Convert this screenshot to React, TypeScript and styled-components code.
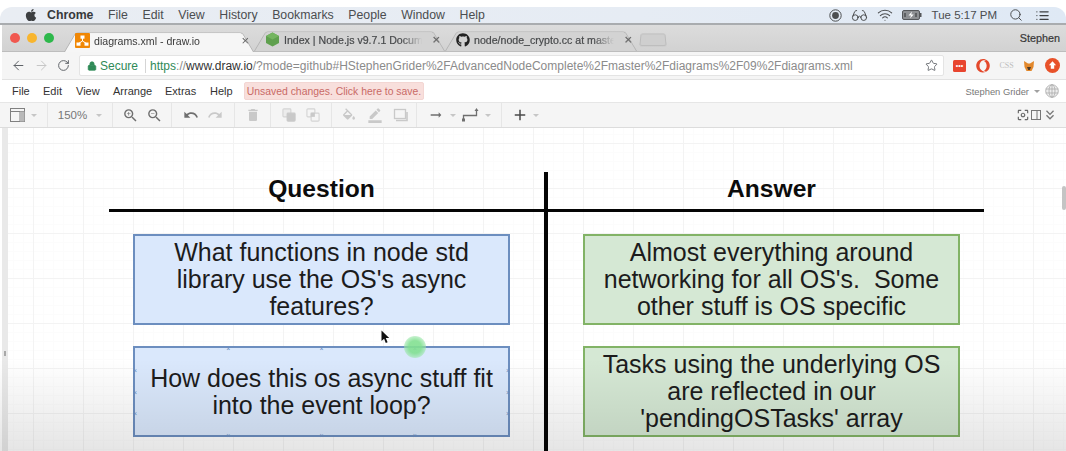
import React, { ReactElement, ReactNode } from 'react';
import styled, { createGlobalStyle } from 'styled-components';
import { FaApple, FaGithub, FaOpera } from 'react-icons/fa';
import { FiList } from 'react-icons/fi';
import {
  MdAdd,
  MdArrowRightAlt,
  MdBorderColor,
  MdCenterFocusWeak,
  MdDelete,
  MdKeyboardDoubleArrowDown,
  MdRedo,
  MdUndo,
  MdZoomIn,
  MdZoomOut,
} from 'react-icons/md';
import { ArrowLeft, ArrowRight, Glasses, Lock, RotateCw, Search, Star, Wifi } from 'lucide-react';

const GlobalStyle = createGlobalStyle`
  html, body {
    margin: 0;
    padding: 0;
    background: #fff;
    overflow: hidden;
  }
  * {
    box-sizing: border-box;
  }
`;

const Screen = styled.div`
  width: 1066px;
  height: 451px;
  padding: 7px 0 0 2px;
  display: flex;
  flex-direction: column;
  overflow: hidden;
  position: relative;
  background: #fff;
  font-family: 'Liberation Sans', Arial, sans-serif;
  filter: blur(0.45px);
`;

/* mac menu bar */
const MacBar = styled.div`
  height: 18px;
  flex: none;
  display: flex;
  align-items: center;
  padding-left: 24px;
  margin-left: -2px;
  border-radius: 12px 12px 0 0;
  background: linear-gradient(90deg, #e9edf3, #e6ecf4 60%, #dfe9f5);
  border-bottom: 2px solid #a9acaf;
  font-size: 12.3px;
  color: #4b4d50;
`;

const MacMenu = styled.div`
  display: flex;
  align-items: center;
  gap: 14.6px;
  margin-left: 9px;
`;

const MacBrand = styled.span`
  font-weight: 700;
  color: #37393b;
`;

const MacExtras = styled.div`
  margin-left: auto;
  display: flex;
  align-items: center;
  gap: 9px;
  padding-right: 16px;
  font-size: 11.5px;
  svg {
    display: block;
  }
`;

const MacClock = styled.span`
  margin: 0 3px 0 1px;
`;

const MacSearch = styled(Search)`
  margin-right: 3px;
`;

/* tabs */
const TabStrip = styled.div`
  height: 27px;
  flex: none;
  display: flex;
  align-items: flex-end;
  padding-left: 8px;
  background: linear-gradient(#dcdcdc, #d2d2d2);
  border-bottom: 1px solid #bdbdbd;
`;

const Lights = styled.div`
  display: flex;
  gap: 7px;
  align-self: center;
  margin-right: 11px;
  width: 43px;
`;

const Light = styled.span<{ $color: string }>`
  width: 10px;
  height: 10px;
  flex: none;
  border-radius: 50%;
  background: ${(p) => p.$color};
`;

const Tab = styled.div<{ $active?: boolean; $width: number }>`
  width: ${(p) => p.$width}px;
  height: 23px;
  flex: none;
  position: relative;
  display: flex;
  align-items: center;
  gap: 4px;
  padding: 0 5px 0 11px;
  font-size: 10.6px;
  color: ${(p) => (p.$active ? '#3a3a3a' : '#47494b')};
  -webkit-text-stroke: ${(p) => (p.$active ? '0' : '0.2px')};
  z-index: ${(p) => (p.$active ? 2 : 1)};
  margin-bottom: ${(p) => (p.$active ? '-1px' : '0')};

  svg {
    flex: none;
  }

  &::before {
    content: '';
    position: absolute;
    inset: 0;
    z-index: -1;
    background: ${(p) => (p.$active ? '#f6f6f6' : '#d3d3d3')};
    border: 1px solid #b4b4b4;
    border-bottom: none;
    border-radius: 3px 3px 0 0;
    transform: perspective(40px) rotateX(14deg);
    transform-origin: bottom;
  }
`;

const TabTitle = styled.span<{ $fade?: boolean }>`
  flex: 1;
  min-width: 0;
  white-space: nowrap;
  ${(p) =>
    p.$fade &&
    `-webkit-mask-image: linear-gradient(90deg, #000 82%, transparent 96%);
     mask-image: linear-gradient(90deg, #000 82%, transparent 96%);`}
`;

const TabClose = styled.span`
  font-size: 13px;
  color: #666;
  line-height: 1;
`;

const NewTab = styled.div`
  width: 26px;
  height: 13px;
  align-self: center;
  margin: 2px 0 0 3px;
  background: #cfcfcf;
  border: 1px solid #bcbcbc;
  border-radius: 2px;
  transform: perspective(30px) rotateX(14deg);
`;

const ProfileName = styled.div`
  margin-left: auto;
  align-self: center;
  padding-right: 6px;
  font-size: 10.8px;
  color: #383838;
  -webkit-text-stroke: 0.2px #383838;
`;

/* address bar */
const AddressBar = styled.div`
  height: 28px;
  flex: none;
  display: flex;
  align-items: center;
  padding-left: 9px;
  background: #f5f5f5;
  border-bottom: 1px solid #e2e2e2;
`;

const NavIcons = styled.div`
  width: 68px;
  display: flex;
  align-items: center;
  gap: 8px;
  flex: none;
`;

const Omnibox = styled.div`
  width: 865px;
  height: 21px;
  flex: none;
  display: flex;
  align-items: center;
  padding: 0 5px 0 7px;
  background: #fff;
  border: 1px solid #e4e4e4;
  border-radius: 2px;
  font-size: 12px;
  white-space: nowrap;
`;

const SecureLabel = styled.span`
  margin-left: 3px;
  padding-right: 7px;
  margin-right: 4px;
  color: #2f8a57;
  border-right: 1px solid #d5d5d5;
`;

const UrlPart = styled.span<{ $tone: 'green' | 'dark' | 'grey' }>`
  color: ${(p) => ({ green: '#2f8a57', dark: '#333', grey: '#8b8b8b' }[p.$tone])};
`;

const StarSlot = styled.span`
  margin-left: auto;
  display: flex;
`;

const Extensions = styled.div`
  flex: 1;
  display: flex;
  align-items: center;
  justify-content: space-between;
  padding: 0 6px 0 9px;
`;

const RedBox = styled.span`
  width: 13px;
  height: 12px;
  border-radius: 1.5px;
  background: #e8452f;
  display: flex;
  align-items: center;
  justify-content: center;
  color: #fff;
  font-size: 7px;
  line-height: 1;
`;

const CssMark = styled.span`
  font-family: 'Liberation Serif', serif;
  font-size: 8px;
  color: #bdbdbd;
`;

/* draw.io menu */
const AppMenu = styled.div`
  height: 22px;
  flex: none;
  display: flex;
  align-items: center;
  padding-left: 10px;
  background: #fff;
  font-size: 11px;
  color: #333;
`;

const MenuItem = styled.span<{ $width: number }>`
  width: ${(p) => p.$width}px;
  flex: none;
`;

const SaveNotice = styled.div`
  width: 180px;
  height: 18px;
  flex: none;
  margin-left: -1px;
  display: flex;
  align-items: center;
  justify-content: center;
  font-size: 10.4px;
  color: #c96a66;
  background: #f8dfdc;
  border: 1px solid #f3d6d3;
  border-radius: 2px;
`;

const UserBox = styled.div`
  margin-left: auto;
  display: flex;
  align-items: center;
  gap: 5px;
  padding-right: 7px;
  font-size: 9.4px;
  color: #777;
`;

const Caret = styled.span<{ $light?: boolean }>`
  width: 0;
  height: 0;
  flex: none;
  border-left: 3.5px solid transparent;
  border-right: 3.5px solid transparent;
  border-top: 3.5px solid ${(p) => (p.$light ? '#c6c6c6' : '#a0a0a0')};
`;

/* toolbar */
const Toolbar = styled.div`
  height: 26px;
  flex: none;
  display: flex;
  align-items: stretch;
  margin-left: -2px;
  background: #f5f5f5;
  border-top: 1px solid #e6e6e6;
  border-bottom: 1px solid #dcdcdc;
`;

const ToolGroup = styled.div<{ $width: number; $gap?: number; $plain?: boolean }>`
  width: ${(p) => p.$width}px;
  flex: none;
  display: flex;
  align-items: center;
  justify-content: center;
  gap: ${(p) => p.$gap ?? 8}px;
  border-right: ${(p) => (p.$plain ? 'none' : '1px solid #e6e6e6')};
`;

const ZoomLabel = styled.span`
  font-size: 11.5px;
  color: #777;
`;

const ToolEnd = styled.div`
  margin-left: auto;
  display: flex;
  align-items: center;
  gap: 1px;
  padding-right: 8px;
`;

/* canvas */
const Workspace = styled.div`
  flex: 1;
  display: flex;
  min-height: 0;
  position: relative;
`;

const Gutter = styled.div`
  width: 6px;
  flex: none;
  display: flex;
  justify-content: center;
  padding-top: 223px;
  background: #e9e9e9;
`;

const GutterGrip = styled.span`
  width: 2px;
  height: 5px;
  background: #a8a8a8;
`;

const Sheet = styled.div`
  flex: 1;
  position: relative;
  padding: 36px 0 0 125px;
  background-color: #fff;
  background-image: linear-gradient(90deg, #f3f3f3 1px, transparent 1px),
    linear-gradient(#f3f3f3 1px, transparent 1px),
    linear-gradient(90deg, #fcfcfc 1px, transparent 1px),
    linear-gradient(#fcfcfc 1px, transparent 1px);
  background-size: 50px 45px, 50px 45px, 10px 9px, 10px 9px;
  background-position: 25px 15px, 25px 15px, 5px 6px, 5px 6px;
`;

const Board = styled.div`
  display: grid;
  grid-template-columns: 377px 377px;
  grid-template-rows: 49px 91px 91px;
  column-gap: 73px;
  row-gap: 21px;
`;

const ColumnTitle = styled.div`
  display: flex;
  align-items: center;
  justify-content: center;
  font-size: 24.6px;
  font-weight: 700;
  color: #0c0c0c;
`;

const Card = styled.div<{ $tone: 'blue' | 'green' }>`
  position: relative;
  display: flex;
  align-items: center;
  justify-content: center;
  padding: 0 4px;
  text-align: center;
  white-space: pre-wrap;
  font-size: 25px;
  line-height: 27px;
  color: #1c1c1c;
  background: ${(p) => (p.$tone === 'blue' ? '#dae8fc' : '#d5e8d4')};
  border: 2px solid ${(p) => (p.$tone === 'blue' ? '#6c8ebf' : '#82b366')};
`;

const HRule = styled.div`
  position: absolute;
  left: 101px;
  top: 81px;
  width: 875px;
  height: 3px;
  background: #050505;
`;

const VRule = styled.div`
  position: absolute;
  left: 536px;
  top: 44px;
  bottom: 0;
  width: 3.5px;
  background: #050505;
`;

const Handle = styled.span<{ $left: number; $top: number }>`
  position: absolute;
  left: ${(p) => p.$left}%;
  top: ${(p) => p.$top}%;
  width: 5px;
  height: 5px;
  transform: translate(-50%, -50%);
  color: #6c8ebf;
  font-size: 7px;
  line-height: 5px;
  text-align: center;
`;

const CursorGlow = styled.span`
  position: absolute;
  left: 396px;
  top: 208px;
  width: 22px;
  height: 22px;
  border-radius: 50%;
  background: radial-gradient(circle, rgba(130, 224, 145, 0.9) 40%, rgba(160, 232, 175, 0.5) 75%, transparent 100%);
`;

const Pointer = styled.svg`
  position: absolute;
  left: 373px;
  top: 202px;
`;

const ScrollThumb = styled.span`
  position: absolute;
  right: 0;
  top: 58px;
  width: 4px;
  height: 24px;
  border-radius: 2px;
  background: #c4c4c4;
`;

const BottomShade = styled.div`
  position: absolute;
  left: -2px;
  right: 0;
  bottom: 0;
  height: 92px;
  pointer-events: none;
  background: linear-gradient(rgba(0, 0, 0, 0), rgba(0, 0, 0, 0.1));
`;

const ICON_ON = '#6f6f6f';
const ICON_OFF = '#c9c9c9';

const macMenus = ['File', 'Edit', 'View', 'History', 'Bookmarks', 'People', 'Window', 'Help'];

const appMenus: [string, number][] = [
  ['File', 31],
  ['Edit', 33],
  ['View', 37],
  ['Arrange', 52],
  ['Extras', 45],
  ['Help', 35],
];

const handleSpots: [number, number][] = [
  [25, 0],
  [50, 0],
  [75, 0],
  [25, 100],
  [50, 100],
  [75, 100],
  [0, 25],
  [0, 50],
  [0, 75],
  [100, 25],
  [100, 50],
  [100, 75],
];

function DrawioIcon(): ReactElement {
  return (
    <svg width="15" height="15" viewBox="0 0 15 15">
      <rect width="15" height="15" rx="1" fill="#f08705" />
      <path d="M7.5 5v3M7.5 8L3.5 10.5M7.5 8l4 2.5" stroke="#fff" strokeWidth="1" fill="none" />
      <rect x="5.5" y="2.5" width="4" height="3.2" fill="#fff" />
      <rect x="1.5" y="9.5" width="4" height="3.2" fill="#fff" />
      <rect x="9.5" y="9.5" width="4" height="3.2" fill="#fff" />
    </svg>
  );
}

function NodeIcon(): ReactElement {
  return (
    <svg width="15" height="15" viewBox="0 0 15 15">
      <polygon points="7.5,0.5 14,4 14,11 7.5,14.5 1,11 1,4" fill="#5fa04e" />
      <polygon points="7.5,0.5 14,4 7.5,7.5 1,4" fill="#74b560" />
    </svg>
  );
}

function RecordIcon(): ReactElement {
  return (
    <svg width="13" height="13" viewBox="0 0 13 13">
      <circle cx="6.5" cy="6.5" r="5.7" fill="none" stroke="#4c4e50" strokeWidth="1" />
      <circle cx="6.5" cy="6.5" r="3.4" fill="#4c4e50" />
    </svg>
  );
}

function BatteryIcon(): ReactElement {
  return (
    <svg width="20" height="10" viewBox="0 0 20 10">
      <rect x="0.5" y="0.5" width="17" height="9" rx="1.5" fill="#8d8f92" stroke="#55575a" />
      <rect x="18" y="3" width="1.5" height="4" fill="#55575a" />
      <path d="M10 1.5L6.5 5.5h2.5L8 8.5l3.7-4H9.2z" fill="#fff" />
      <path d="M3 3v4M14 3v4" stroke="#2f3133" strokeWidth="1" />
    </svg>
  );
}

function PanelIcon(): ReactElement {
  return (
    <svg width="15" height="14" viewBox="0 0 15 14">
      <rect x="0.5" y="0.5" width="14" height="13" fill="none" stroke="#808080" />
      <path d="M0.5 3.5h14M10 3.5v10" stroke="#808080" />
      <rect x="10" y="3.5" width="4.5" height="10" fill="#b9b9b9" />
    </svg>
  );
}

function OrderIcon({ back }: { back?: boolean }): ReactElement {
  return (
    <svg width="14" height="14" viewBox="0 0 15 15">
      <rect x="1" y="1" width="8.5" height="8.5" rx="1" fill={back ? '#f5f5f5' : '#ececec'} stroke="#d4d4d4" strokeWidth="1.2" />
      <rect x="5.5" y="5.5" width="8.5" height="8.5" rx="1" fill={back ? '#f5f5f5' : '#c9c9c9'} stroke={back ? '#d4d4d4' : '#c9c9c9'} strokeWidth="1.2" />
      {back && <rect x="5" y="5" width="4.5" height="4.5" fill="#c9c9c9" />}
    </svg>
  );
}

function FillIcon(): ReactElement {
  return (
    <svg width="16" height="16" viewBox="0 0 24 20">
      <path
        d="M16.56 8.94L7.62 0 6.21 1.41l2.38 2.38-5.15 5.15c-.59.59-.59 1.54 0 2.12l5.5 5.5c.29.29.68.44 1.06.44s.77-.15 1.06-.44l5.5-5.5c.59-.58.59-1.53 0-2.12zM5.21 10L10 5.21 14.79 10H5.21zM19 11.5s-2 2.17-2 3.5c0 1.1.9 2 2 2s2-.9 2-2c0-1.33-2-3.5-2-3.5z"
        fill={ICON_OFF}
      />
    </svg>
  );
}

function ShadowIcon(): ReactElement {
  return (
    <svg width="15" height="14" viewBox="0 0 15 14">
      <rect x="1.5" y="1.5" width="11" height="9" fill="none" stroke={ICON_OFF} strokeWidth="1.3" />
      <path d="M3 12.5h11V4" fill="none" stroke={ICON_OFF} strokeWidth="1.6" />
    </svg>
  );
}

function WaypointIcon(): ReactElement {
  return (
    <svg width="17" height="14" viewBox="0 0 17 14">
      <path d="M1.5 12.5V7.5h13V2.5" fill="none" stroke={ICON_ON} strokeWidth="1.3" />
      <rect x="0" y="10.5" width="3" height="3" fill={ICON_ON} />
      <polygon points="12.5,3 14.5,0 16.5,3" fill={ICON_ON} />
    </svg>
  );
}

function SplitIcon(): ReactElement {
  return (
    <svg width="10" height="10" viewBox="0 0 10 10">
      <rect x="0.5" y="0.5" width="9" height="9" fill="none" stroke="#777" />
      <path d="M6 0.5v9" stroke="#777" />
    </svg>
  );
}

function GlobeIcon(): ReactElement {
  return (
    <svg width="14" height="14" viewBox="0 0 14 14" fill="none" stroke="#aaa" strokeWidth="0.8">
      <circle cx="7" cy="7" r="6.3" fill="#eee" />
      <ellipse cx="7" cy="7" rx="3" ry="6.3" />
      <path d="M0.8 5h12.4M0.8 9h12.4M7 0.7v12.6" />
    </svg>
  );
}

function FoxIcon(): ReactElement {
  return (
    <svg width="12" height="12" viewBox="0 0 12 12">
      <polygon points="1,1 5,3.5 7,3.5 11,1 10.5,7 8.5,11 3.5,11 1.5,7" fill="#e2882c" />
      <polygon points="4,7 8,7 6.8,10 5.2,10" fill="#4a3a2a" />
    </svg>
  );
}

function UploadIcon(): ReactElement {
  return (
    <svg width="15" height="15" viewBox="0 0 15 15">
      <circle cx="7.5" cy="7.5" r="7.5" fill="#e8522a" />
      <path d="M7.5 3.2l3.6 4H9.2v3.6H5.8V7.2H3.9z" fill="#fff" />
    </svg>
  );
}

function Tool({
  children,
  gap,
  plain,
  width,
}: {
  children: ReactNode;
  gap?: number;
  plain?: boolean;
  width: number;
}): ReactElement {
  return (
    <ToolGroup $width={width} $gap={gap} $plain={plain}>
      {children}
    </ToolGroup>
  );
}

function App(): ReactElement {
  return (
    <>
      <GlobalStyle />
      <Screen>
        <MacBar>
          <FaApple size={14} color="#3d3f41" />
          <MacMenu>
            <MacBrand>Chrome</MacBrand>
            {macMenus.map((item) => (
              <span key={item}>{item}</span>
            ))}
          </MacMenu>
          <MacExtras>
            <RecordIcon />
            <Glasses size={17} strokeWidth={1.4} color="#4c4e50" />
            <Wifi size={16} strokeWidth={1.6} color="#4c4e50" />
            <BatteryIcon />
            <MacClock>Tue 5:17 PM</MacClock>
            <MacSearch size={14} strokeWidth={1.7} color="#4c4e50" />
            <FiList size={15} color="#3d3f41" />
          </MacExtras>
        </MacBar>

        <TabStrip>
          <Lights>
            <Light $color="#f0584f" />
            <Light $color="#f8b52e" />
            <Light $color="#2db84b" />
          </Lights>
          <Tab $active $width={190}>
            <DrawioIcon />
            <TabTitle>diagrams.xml - draw.io</TabTitle>
            <TabClose>×</TabClose>
          </Tab>
          <Tab $width={191}>
            <NodeIcon />
            <TabTitle $fade>Index | Node.js v9.7.1 Docume</TabTitle>
            <TabClose>×</TabClose>
          </Tab>
          <Tab $width={192}>
            <FaGithub size={14} color="#222" />
            <TabTitle $fade>node/node_crypto.cc at maste</TabTitle>
            <TabClose>×</TabClose>
          </Tab>
          <NewTab />
          <ProfileName>Stephen</ProfileName>
        </TabStrip>

        <AddressBar>
          <NavIcons>
            <ArrowLeft size={15} color="#5f6368" strokeWidth={1.6} />
            <ArrowRight size={15} color="#c6c6c6" strokeWidth={1.6} />
            <RotateCw size={13} color="#5f6368" strokeWidth={1.8} />
          </NavIcons>
          <Omnibox>
            <Lock size={10} color="#2f8a57" fill="#2f8a57" strokeWidth={2} />
            <SecureLabel>Secure</SecureLabel>
            <UrlPart $tone="green">https</UrlPart>
            <UrlPart $tone="grey">://</UrlPart>
            <UrlPart $tone="dark">www.draw.io</UrlPart>
            <UrlPart $tone="grey">/?mode=github#HStephenGrider%2FAdvancedNodeComplete%2Fmaster%2Fdiagrams%2F09%2Fdiagrams.xml</UrlPart>
            <StarSlot>
              <Star size={13} color="#5f6368" strokeWidth={1.6} />
            </StarSlot>
          </Omnibox>
          <Extensions>
            <RedBox>•••</RedBox>
            <FaOpera size={14} color="#e4492c" />
            <CssMark>CSS</CssMark>
            <FoxIcon />
            <UploadIcon />
          </Extensions>
        </AddressBar>

        <AppMenu>
          {appMenus.map(([label, width]) => (
            <MenuItem key={label} $width={width}>
              {label}
            </MenuItem>
          ))}
          <SaveNotice>Unsaved changes. Click here to save.</SaveNotice>
          <UserBox>
            <span>Stephen Grider</span>
            <Caret />
            <GlobeIcon />
          </UserBox>
        </AppMenu>

        <Toolbar>
          <Tool width={48} gap={6}>
            <PanelIcon />
            <Caret $light />
          </Tool>
          <Tool width={65} gap={9}>
            <ZoomLabel>150%</ZoomLabel>
            <Caret $light />
          </Tool>
          <Tool width={59} gap={7}>
            <MdZoomIn size={17} color={ICON_ON} />
            <MdZoomOut size={17} color={ICON_ON} />
          </Tool>
          <Tool width={63} gap={8}>
            <MdUndo size={16} color={ICON_ON} />
            <MdRedo size={16} color={ICON_OFF} />
          </Tool>
          <Tool width={36}>
            <MdDelete size={16} color={ICON_OFF} />
          </Tool>
          <Tool width={61} gap={10}>
            <OrderIcon />
            <OrderIcon back />
          </Tool>
          <Tool width={85} gap={10}>
            <FillIcon />
            <MdBorderColor size={16} color={ICON_OFF} />
            <ShadowIcon />
          </Tool>
          <Tool width={85} gap={6}>
            <MdArrowRightAlt size={16} color={ICON_ON} />
            <Caret $light />
            <WaypointIcon />
            <Caret $light />
          </Tool>
          <Tool width={45} gap={4} plain>
            <MdAdd size={18} color="#4a4a4a" />
            <Caret $light />
          </Tool>
          <ToolEnd>
            <MdCenterFocusWeak size={14} color="#666" />
            <SplitIcon />
            <MdKeyboardDoubleArrowDown size={16} color="#777" />
          </ToolEnd>
        </Toolbar>

        <Workspace>
          <Gutter>
            <GutterGrip />
          </Gutter>
          <Sheet>
            <Board>
              <ColumnTitle>Question</ColumnTitle>
              <ColumnTitle>Answer</ColumnTitle>
              <Card $tone="blue">{"What functions in node std\nlibrary use the OS's async\nfeatures?"}</Card>
              <Card $tone="green">{"Almost everything around\nnetworking for all OS's.  Some\nother stuff is OS specific"}</Card>
              <Card $tone="blue">
                {'How does this os async stuff fit\ninto the event loop?'}
                {handleSpots.map(([left, top]) => (
                  <Handle key={`${left}-${top}`} $left={left} $top={top}>
                    ×
                  </Handle>
                ))}
              </Card>
              <Card $tone="green">{"Tasks using the underlying OS\nare reflected in our\n'pendingOSTasks' array"}</Card>
            </Board>
            <HRule />
            <VRule />
            <CursorGlow />
            <Pointer width="9" height="14" viewBox="0 0 9 14">
              <path d="M0.5 0.5v10.5l2.6-2.3 1.7 4.3 1.8-.8-1.8-4.2h3.4z" fill="#111" />
            </Pointer>
            <ScrollThumb />
          </Sheet>
          <BottomShade />
        </Workspace>
      </Screen>
    </>
  );
}

export default App;
